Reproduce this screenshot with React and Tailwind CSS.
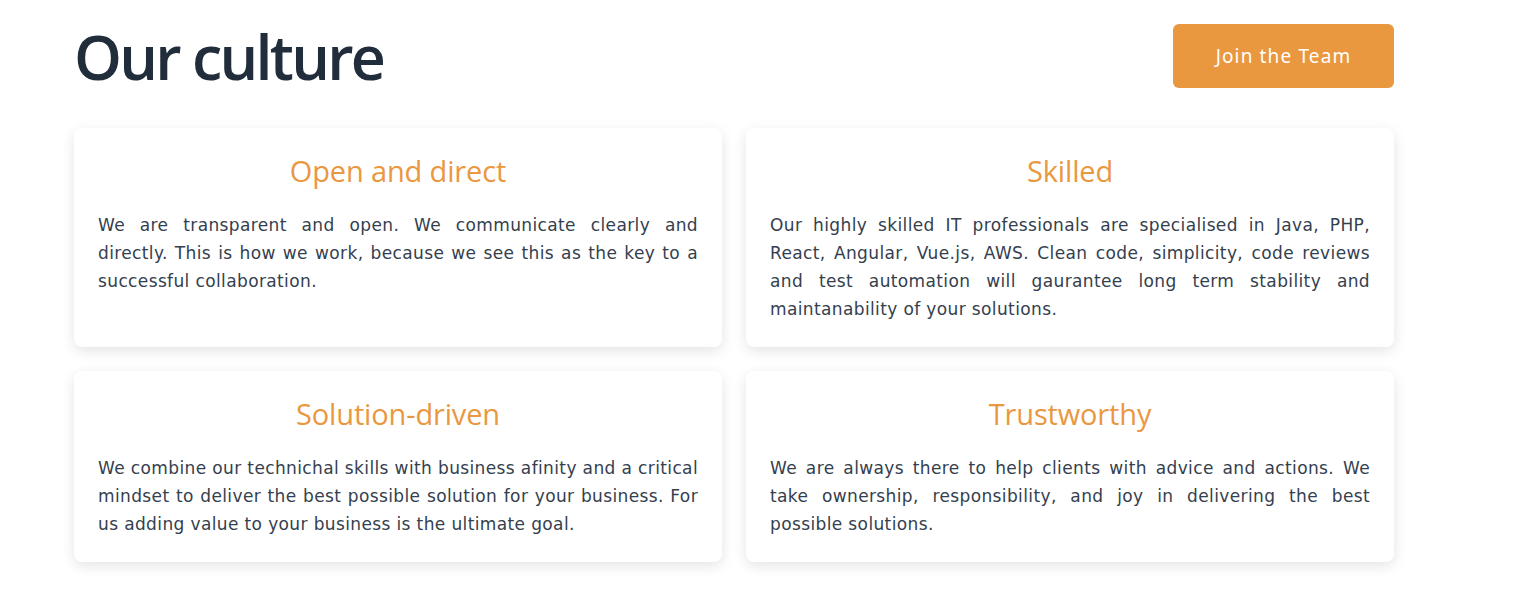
import React from "react";

const values = [
  {
    title: "Open and direct",
    text: "We are transparent and open. We communicate clearly and directly. This is how we work, because we see this as the key to a successful collaboration.",
  },
  {
    title: "Skilled",
    text: "Our highly skilled IT professionals are specialised in Java, PHP, React, Angular, Vue.js, AWS. Clean code, simplicity, code reviews and test automation will gaurantee long term stability and maintanability of your solutions.",
  },
  {
    title: "Solution-driven",
    text: "We combine our technichal skills with business afinity and a critical mindset to deliver the best possible solution for your business. For us adding value to your business is the ultimate goal.",
  },
  {
    title: "Trustworthy",
    text: "We are always there to help clients with advice and actions. We take ownership, responsibility, and joy in delivering the best possible solutions.",
  },
];

export default function App() {
  return (
    <main className="min-h-screen bg-white font-['Open_Sans',sans-serif]">
      <section className="w-[1320px] ml-[74px] pt-6 pb-12">
        <div className="flex items-center justify-between">
          <h1 className="text-[61px] leading-none font-semibold tracking-[-0.045em] text-[#212d3b]">
            Our culture
          </h1>
          <button className="h-16 w-[221px] rounded-md bg-[#ea983f] text-[19px] text-white font-['Noto_Sans',sans-serif] tracking-[0.06em]">
            Join the Team
          </button>
        </div>

        <div className="mt-10 grid grid-cols-2 gap-6">
          {values.map((v) => (
            <div
              key={v.title}
              className="rounded-lg bg-white px-6 pt-6 pb-6 shadow-[0_4px_14px_rgba(0,0,0,0.11)]"
            >
              <h2 className="text-center text-[29px] leading-[38px] font-medium tracking-[-0.005em] text-[#ea983f]">
                {v.title}
              </h2>
              <p className="mt-[21px] text-justify text-[17px] leading-[28px] text-[#34404e] font-['DejaVu_Sans',sans-serif] tracking-[0.022em]">
                {v.text}
              </p>
            </div>
          ))}
        </div>
      </section>
    </main>
  );
}
